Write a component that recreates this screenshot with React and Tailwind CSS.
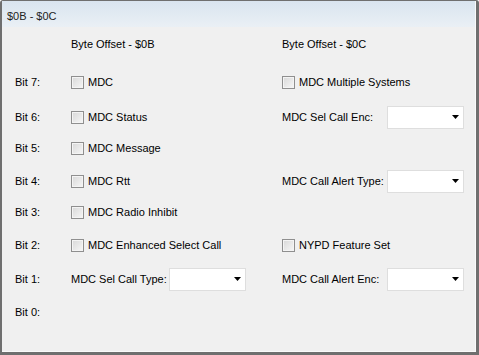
import React from "react";

function Check({ label }) {
  return (
    <div className="flex items-center whitespace-nowrap">
      <div className="w-[13px] h-[13px] shrink-0 border border-[#8f8f8f] bg-gradient-to-br from-[#d8d8d8] to-[#f7f7f7] shadow-[inset_0_0_0_1px_#f4f4f4]" />
      <span className="ml-[4px]">{label}</span>
    </div>
  );
}

function Combo() {
  return (
    <div className="w-[77px] h-[23px] shrink-0 bg-white border border-[#dedede] flex items-center justify-end pr-[4px]">
      <svg width="7" height="4" viewBox="0 0 7 4">
        <path d="M0 0 H7 L3.5 4 Z" fill="#000" />
      </svg>
    </div>
  );
}

function Field({ label, w }) {
  return (
    <div className="flex items-center whitespace-nowrap">
      <span className={`${w} shrink-0`}>{label}</span>
      <Combo />
    </div>
  );
}

function Row({ bit, left, right, mt }) {
  return (
    <div className={`flex items-center h-[24px] ${mt}`}>
      <div className="w-[69px] shrink-0 pl-[13px]">{bit}</div>
      <div className="w-[211px] shrink-0">{left}</div>
      <div className="flex-1">{right}</div>
    </div>
  );
}

export default function App() {
  return (
    <div
      className="w-[479px] h-[355px] bg-[#6f6f6f] pt-[1px] pl-[2px] pr-[3px] pb-[3px] rounded-tl-[3px] rounded-tr-[3px] text-[11px] text-black"
      style={{ fontFamily: '"Liberation Sans", Arial, sans-serif' }}
    >
      <div className="w-full h-full bg-[#f0f0f0] flex flex-col border-r border-b border-[#fafafa]">
        {/* Title bar */}
        <div className="h-[26px] shrink-0 bg-gradient-to-b from-[#d9e4ef] to-[#eaf0f5] flex items-center pl-[5px] pt-[5px] text-[#222]">
          $0B - $0C
        </div>

        {/* Header */}
        <div className="flex items-center h-[16px] mt-[9px]">
          <div className="w-[69px] shrink-0" />
          <div className="w-[211px] shrink-0">Byte Offset - $0B</div>
          <div className="flex-1">Byte Offset - $0C</div>
        </div>

        <Row mt="mt-[18px]" bit="Bit 7:" left={<Check label="MDC" />} right={<Check label="MDC Multiple Systems" />} />
        <Row mt="mt-[11px]" bit="Bit 6:" left={<Check label="MDC Status" />} right={<Field label="MDC Sel Call Enc:" w="w-[105px]" />} />
        <Row mt="mt-[7px]" bit="Bit 5:" left={<Check label="MDC Message" />} />
        <Row mt="mt-[9px]" bit="Bit 4:" left={<Check label="MDC Rtt" />} right={<Field label="MDC Call Alert Type:" w="w-[105px]" />} />
        <Row mt="mt-[7px]" bit="Bit 3:" left={<Check label="MDC Radio Inhibit" />} />
        <Row mt="mt-[9px]" bit="Bit 2:" left={<Check label="MDC Enhanced Select Call" />} right={<Check label="NYPD Feature Set" />} />
        <Row mt="mt-[10px]" bit="Bit 1:" left={<Field label="MDC Sel Call Type:" w="w-[98px]" />} right={<Field label="MDC Call Alert Enc:" w="w-[105px]" />} />
        <Row mt="mt-[9px]" bit="Bit 0:" />
      </div>
    </div>
  );
}
